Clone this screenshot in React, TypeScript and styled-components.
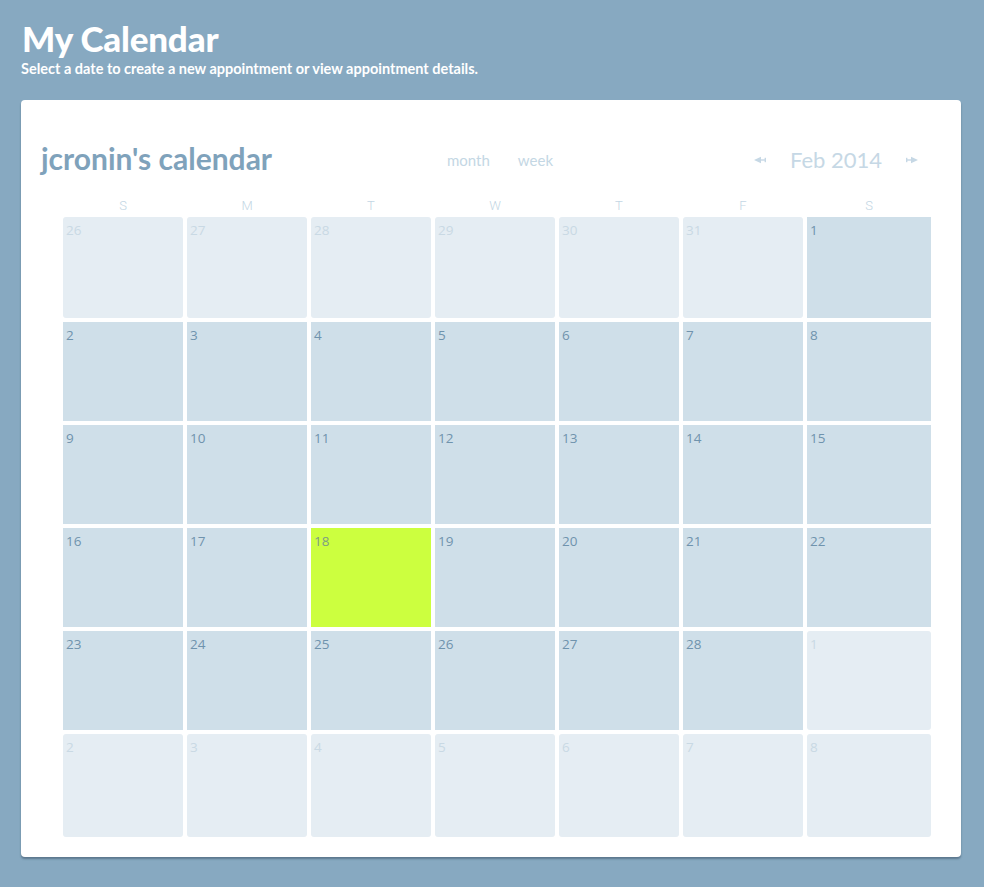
import React from "react";
import styled, { createGlobalStyle } from "styled-components";

const Global = createGlobalStyle`
  html, body {
    margin: 0;
    padding: 0;
    background: #87a9c1;
  }
  body {
    font-family: Lato, "Open Sans", sans-serif;
  }
`;

const Page = styled.div`
  width: 984px;
  min-height: 887px;
  box-sizing: border-box;
  padding: 17px 23px 30px 21px;
  background: #87a9c1;
`;

const Title = styled.h1`
  margin: 0 0 0 1px;
  font-family: Lato, sans-serif;
  font-weight: 900;
  font-size: 35px;
  line-height: 42px;
  color: #ffffff;
  letter-spacing: -0.2px;
`;

const Subtitle = styled.p`
  margin: 0;
  font-family: Lato, sans-serif;
  font-weight: 700;
  font-size: 14.5px;
  line-height: 19px;
  color: #ffffff;
`;

const Card = styled.div`
  margin-top: 22px;
  background: #ffffff;
  border-radius: 4px;
  box-shadow: 0 2px 2px rgba(40, 60, 80, 0.45);
  padding: 40px 30px 20px 20px;
`;

const Header = styled.div`
  display: flex;
  align-items: center;
  height: 36px;
`;

const CalTitle = styled.h2`
  margin: 0;
  font-family: Lato, sans-serif;
  font-weight: 700;
  font-size: 30px;
  line-height: 36px;
  color: #7fa2bb;
  width: 406px;
`;

const Views = styled.div`
  display: flex;
  gap: 28px;
  margin-top: 4px;
`;

const ViewLink = styled.span`
  font-family: Lato, sans-serif;
  font-size: 15px;
  color: #c4d7e4;
`;

const MonthNav = styled.div`
  margin-left: auto;
  margin-right: 13px;
  display: flex;
  align-items: center;
  gap: 24px;
`;

const MonthLabel = styled.span`
  font-family: Lato, sans-serif;
  font-size: 22px;
  color: #c6d8e5;
  margin-top: 2px;
`;

const ArrowSvg = styled.svg`
  display: block;
  margin-top: 3px;
`;

const Grid = styled.div`
  margin: 19px 0 0 22px;
  display: grid;
  grid-template-columns: repeat(6, 120px) 124px;
  column-gap: 4px;
`;

const DayName = styled.div`
  height: 22px;
  line-height: 22px;
  text-align: center;
  font-family: Roboto, sans-serif;
  font-weight: 300;
  font-size: 13px;
  color: #c3d6e4;
`;

const Cells = styled.div`
  display: grid;
  grid-template-columns: repeat(6, 120px) 124px;
  grid-template-rows: 101px repeat(4, 99px) 103px;
  gap: 4px;
  margin-left: 22px;
`;

type Kind = "in" | "out" | "today";

const Cell = styled.div<{ $kind: Kind }>`
  box-sizing: border-box;
  padding: 4px 3px;
  border-radius: ${(p) => (p.$kind === "out" ? "3px" : "0")};
  background: ${(p) =>
    p.$kind === "today" ? "#ccff3f" : p.$kind === "in" ? "#cfdfe9" : "#e5edf3"};
  font-family: "Open Sans", sans-serif;
  font-size: 13.5px;
  line-height: 18px;
  color: ${(p) =>
    p.$kind === "today" ? "#7f9d84" : p.$kind === "in" ? "#6f93ad" : "#c9d9e4"};
`;

const Arrow = ({ dir }: { dir: "left" | "right" }) => (
  <ArrowSvg width="12" height="8" viewBox="0 0 12 8">
    {dir === "left" ? (
      <g fill="#c6d8e5">
        <polygon points="0,4 7,0.8 7,7.2" />
        <rect x="6" y="3.3" width="6" height="1.4" />
        <rect x="10.6" y="1.8" width="1.4" height="4.4" />
      </g>
    ) : (
      <g fill="#c6d8e5">
        <polygon points="12,4 5,0.8 5,7.2" />
        <rect x="0" y="3.3" width="6" height="1.4" />
        <rect x="0" y="1.8" width="1.4" height="4.4" />
      </g>
    )}
  </ArrowSvg>
);

const dayNames = ["S", "M", "T", "W", "T", "F", "S"];

function buildDays() {
  const days: { n: number; kind: Kind }[] = [];
  for (let d = 26; d <= 31; d++) days.push({ n: d, kind: "out" });
  for (let d = 1; d <= 28; d++) days.push({ n: d, kind: d === 18 ? "today" : "in" });
  for (let d = 1; d <= 8; d++) days.push({ n: d, kind: "out" });
  return days;
}

export default function App() {
  const days = buildDays();
  return (
    <>
      <Global />
      <Page>
        <Title>My Calendar</Title>
        <Subtitle>Select a date to create a new appointment or view appointment details.</Subtitle>
        <Card>
          <Header>
            <CalTitle>jcronin's calendar</CalTitle>
            <Views>
              <ViewLink>month</ViewLink>
              <ViewLink>week</ViewLink>
            </Views>
            <MonthNav>
              <Arrow dir="left" />
              <MonthLabel>Feb 2014</MonthLabel>
              <Arrow dir="right" />
            </MonthNav>
          </Header>
          <Grid>
            {dayNames.map((d, i) => (
              <DayName key={i}>{d}</DayName>
            ))}
          </Grid>
          <Cells>
            {days.map((d, i) => (
              <Cell key={i} $kind={d.kind}>
                {d.n}
              </Cell>
            ))}
          </Cells>
        </Card>
      </Page>
    </>
  );
}
